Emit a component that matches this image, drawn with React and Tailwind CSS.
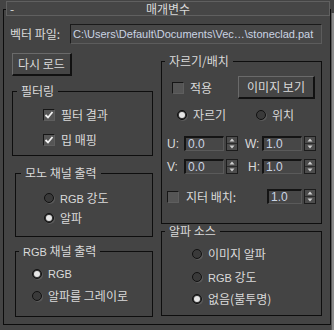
import React from 'react'

const KR = { fontFamily: '"Noto Sans CJK KR", "Noto Sans", sans-serif' }
const LAT = { fontFamily: '"Liberation Sans", "DejaVu Sans", sans-serif' }

function Check({ checked }) {
  return (
    <div className="w-[12px] h-[12px] shrink-0 border border-t-[#161616] border-l-[#161616] border-r-[#5e5e5e] border-b-[#5e5e5e] bg-[#555] flex items-center justify-center">
      {checked && (
        <svg width="10" height="10" viewBox="0 0 10 10" className="block">
          <polyline points="1.5,5 4,7.5 8.5,2" fill="none" stroke="#f2f2f2" strokeWidth="1.8" />
        </svg>
      )}
    </div>
  )
}

function Radio({ checked }) {
  return (
    <div className="w-[10px] h-[10px] shrink-0 rounded-full bg-[#3a3a3a] border border-[#111] shadow-[1px_1px_0_#5a5a5a] flex items-center justify-center">
      {checked && <div className="w-[6px] h-[6px] rounded-full bg-[#e6e6e6]" />}
    </div>
  )
}

function Spin() {
  return (
    <svg width="12" height="15" viewBox="0 0 12 15" className="block shrink-0 ml-[2px]">
      <rect x="0.5" y="0.5" width="11" height="14" fill="#4c4c4c" stroke="#1c1c1c" />
      <line x1="1" y1="7.5" x2="11" y2="7.5" stroke="#2a2a2a" />
      <polygon points="3.5,5.5 8.5,5.5 6,2.5" fill="#cfcfcf" />
      <polygon points="3.5,9.5 8.5,9.5 6,12.5" fill="#cfcfcf" />
    </svg>
  )
}

function NumBox({ value, w }) {
  return (
    <div className={`${w} h-[15px] shrink-0 border-t-2 border-l-2 border-t-[#141414] border-l-[#141414] border-r border-b border-r-[#5a5a5a] border-b-[#5a5a5a] bg-[#474747] flex items-center pl-[2px] text-[12px] text-[#cbd4e4]`} style={LAT}>
      {value}
    </div>
  )
}

// group box: title sits in the top border line
function Group({ title, className, bodyClass, lead = 4, children }) {
  return (
    <div className={`flex flex-col ${className}`}>
      <div className="h-[14px] flex">
        <div className="self-end h-[7px] border-t border-l border-[#0e0e0e]" style={{ width: lead }} />
        <span className="px-[4px] text-[12px] leading-[14px] text-[#dadada] whitespace-nowrap">{title}</span>
        <div className="flex-1 self-end h-[7px] border-t border-r border-[#0e0e0e]" />
      </div>
      <div className={`border-l border-r border-b border-[#0e0e0e] ${bodyClass}`}>{children}</div>
    </div>
  )
}

function Btn({ children, className }) {
  return (
    <div className={`border-t border-l border-t-[#6a6a6a] border-l-[#6a6a6a] border-r-2 border-b-2 border-r-[#111] border-b-[#111] bg-[#454545] flex items-center justify-center text-[12px] text-[#dadada] ${className}`}>
      {children}
    </div>
  )
}

export default function App() {
  return (
    <div className="w-[334px] h-[330px] bg-[#444] flex overflow-hidden text-[#dadada]" style={KR}>
      <div className="w-[331px] pt-[1px] pl-[3px]">
        <div className="mt-[8px] w-[328px] h-[316px] border border-[#0c0c0c] flex flex-col">
          <div className="-mt-[9px] ml-[2px] w-[324px] h-[15px] border border-[#606060] bg-[#464646] grid grid-cols-[1fr_auto_1fr] items-center text-[12px] leading-[13px]">
            <span className="pl-[3px]">-</span>
            <span>매개변수</span>
            <span />
          </div>

          <div className="mt-[8px] pl-[6px] flex items-center">
            <span className="w-[60px] text-[12px] leading-[14px]">벡터 파일:</span>
            <div className="w-[252px] h-[20px] border border-t-[#1a1a1a] border-l-[#1a1a1a] border-r-[#5c5c5c] border-b-[#5c5c5c] bg-[#474747] flex items-center px-[2px] text-[11px] text-[#cbd4e4] whitespace-nowrap overflow-hidden" style={LAT}>
              C:\Users\Default\Documents\Vec…\stoneclad.pat
            </div>
          </div>

          <div className="mt-[9px] pl-[8px] flex">
            <div className="w-[141px] flex flex-col">
              <Btn className="w-[60px] h-[23px]">다시 로드</Btn>

              <Group title="필터링" lead={5} className="mt-[8px] w-[141px]" bodyClass="pl-[30px] pt-[10px] pb-[8px]">
                <div className="h-[14px] flex items-center gap-[6px] text-[12px]">
                  <Check checked /> <span>필터 결과</span>
                </div>
                <div className="mt-[11px] h-[14px] flex items-center gap-[6px] text-[12px]">
                  <Check checked /> <span>밉 매핑</span>
                </div>
              </Group>

              <Group title="모노 채널 출력" lead={6} className="mt-[10px] ml-[3px] w-[138px]" bodyClass="pl-[28px] pt-[11px] pb-[11px]">
                <div className="h-[14px] flex items-center gap-[6px] text-[12px]">
                  <Radio /> <span><span className="text-[11px]" style={LAT}>RGB</span> 강도</span>
                </div>
                <div className="mt-[6px] h-[14px] flex items-center gap-[6px] text-[12px]">
                  <Radio checked /> <span>알파</span>
                </div>
              </Group>

              <Group title={<><span className="text-[11px]" style={LAT}>RGB</span> 채널 출력</>} lead={4} className="mt-[7px] ml-[3px] w-[138px]" bodyClass="pl-[16px] pt-[9px] pb-[13px]">
                <div className="h-[14px] flex items-center gap-[6px] text-[12px]">
                  <Radio checked /> <span className="text-[11px]" style={LAT}>RGB</span>
                </div>
                <div className="mt-[8px] h-[14px] flex items-center gap-[6px] text-[12px]">
                  <Radio /> <span>알파를 그레이로</span>
                </div>
              </Group>
            </div>

            <div className="ml-[8px] w-[161px] flex flex-col">
              <Group title="자르기/배치" lead={4} className="mt-[1px] w-[161px]" bodyClass="pt-[8px] pb-[19px]">
                <div className="pl-[10px] pr-[6px] h-[23px] flex items-center justify-between text-[12px]">
                  <div className="flex items-center gap-[6px]">
                    <Check /> <span>적용</span>
                  </div>
                  <Btn className="w-[77px] h-[23px]">이미지 보기</Btn>
                </div>
                <div className="mt-[9px] pl-[15px] h-[14px] flex items-center text-[12px]">
                  <div className="w-[79px] flex items-center gap-[6px]">
                    <Radio checked /> <span>자르기</span>
                  </div>
                  <div className="flex items-center gap-[6px]">
                    <Radio /> <span>위치</span>
                  </div>
                </div>
                <div className="mt-[14px] h-[15px] pl-[5px] flex items-center text-[12px]" style={LAT}>
                  <span className="w-[17px]">U:</span>
                  <NumBox value="0.0" w="w-[40px]" />
                  <Spin />
                  <span className="ml-[7px] w-[17px]">W:</span>
                  <NumBox value="1.0" w="w-[40px]" />
                  <Spin />
                </div>
                <div className="mt-[8px] h-[15px] pl-[5px] flex items-center text-[12px]" style={LAT}>
                  <span className="w-[17px]">V:</span>
                  <NumBox value="0.0" w="w-[40px]" />
                  <Spin />
                  <span className="ml-[7px] w-[17px] text-right pr-[2px]">H:</span>
                  <NumBox value="1.0" w="w-[40px]" />
                  <Spin />
                </div>
                <div className="mt-[15px] h-[15px] pl-[5px] flex items-center text-[12px]">
                  <Check />
                  <span className="ml-[7px] w-[81px]">지터 배치:</span>
                  <NumBox value="1.0" w="w-[35px]" />
                  <Spin />
                </div>
              </Group>

              <Group title="알파 소스" lead={4} className="w-[161px]" bodyClass="pl-[30px] pt-[9px] pb-[9px]">
                <div className="h-[14px] flex items-center gap-[6px] text-[12px]">
                  <Radio /> <span>이미지 알파</span>
                </div>
                <div className="mt-[9px] h-[14px] flex items-center gap-[6px] text-[12px]">
                  <Radio /> <span><span className="text-[11px]" style={LAT}>RGB</span> 강도</span>
                </div>
                <div className="mt-[8px] h-[14px] flex items-center gap-[6px] text-[12px]">
                  <Radio checked /> <span>없음(불투명)</span>
                </div>
              </Group>
            </div>
          </div>
        </div>
      </div>
      <div className="mt-[13px] w-[3px] h-[317px] bg-[#8c8c8c] border-l border-[#5a5a5a]" />
    </div>
  )
}
